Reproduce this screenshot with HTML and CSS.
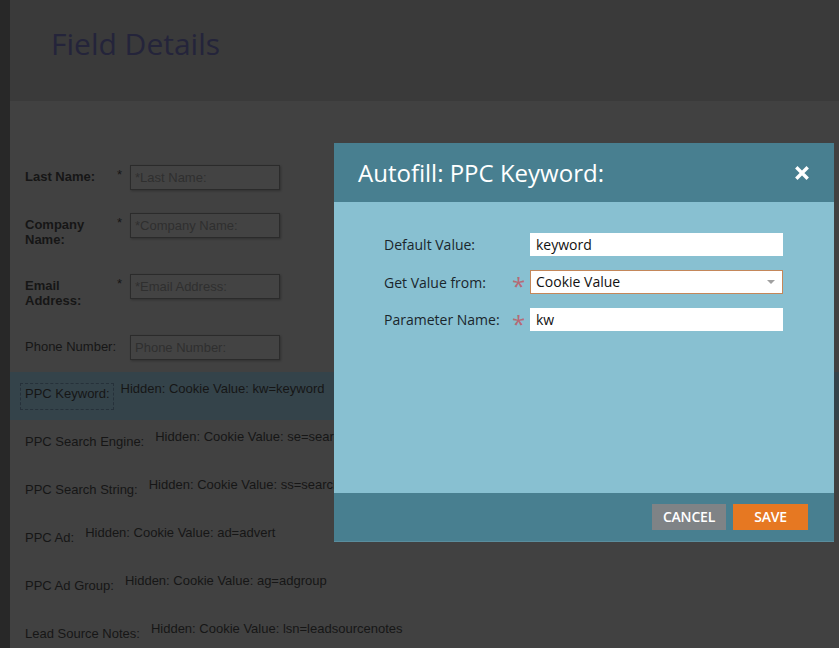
FILE: index.html
```html
<!DOCTYPE html>
<html>
<head>
<meta charset="utf-8">
<title>Field Details</title>
<link rel="stylesheet" href="styles.css">
</head>
<body>
<div class="page">
  <div class="strip"></div>
  <div class="main">
    <div class="header"><h1 class="title">Field Details</h1></div>
    <div class="form">
      <div class="frow h48">
        <div class="flabel bold">Last Name:</div>
        <div class="fstar">*</div>
        <div class="finput">*Last Name:</div>
      </div>
      <div class="frow h61">
        <div class="flabel bold">Company Name:</div>
        <div class="fstar">*</div>
        <div class="finput">*Company Name:</div>
      </div>
      <div class="frow h61">
        <div class="flabel bold">Email Address:</div>
        <div class="fstar">*</div>
        <div class="finput">*Email Address:</div>
      </div>
      <div class="frow h37">
        <div class="flabel">Phone Number:</div>
        <div class="fstar"></div>
        <div class="finput">Phone Number:</div>
      </div>
      <div class="hrow selected">
        <div class="hlabel">PPC Keyword:</div>
        <div class="hvalue">Hidden: Cookie Value: kw=keyword</div>
      </div>
      <div class="hrow">
        <div class="hlabel">PPC Search Engine:</div>
        <div class="hvalue">Hidden: Cookie Value: se=searchengine</div>
      </div>
      <div class="hrow">
        <div class="hlabel">PPC Search String:</div>
        <div class="hvalue">Hidden: Cookie Value: ss=searchstring</div>
      </div>
      <div class="hrow">
        <div class="hlabel">PPC Ad:</div>
        <div class="hvalue">Hidden: Cookie Value: ad=advert</div>
      </div>
      <div class="hrow">
        <div class="hlabel">PPC Ad Group:</div>
        <div class="hvalue">Hidden: Cookie Value: ag=adgroup</div>
      </div>
      <div class="hrow">
        <div class="hlabel">Lead Source Notes:</div>
        <div class="hvalue">Hidden: Cookie Value: lsn=leadsourcenotes</div>
      </div>
    </div>
  </div>
</div>

<div class="modal">
  <div class="mhead">
    <div class="mtitle">Autofill: PPC Keyword:</div>
    <svg class="mclose" width="14" height="14" viewBox="0 0 14 14"><path d="M2.5 2.5 L11.5 11.5 M11.5 2.5 L2.5 11.5" stroke="#fff" stroke-width="3.4" stroke-linecap="square"/></svg>
  </div>
  <div class="mbody">
    <div class="mgrid">
      <div class="mlabel">Default Value:</div>
      <div class="mstar"></div>
      <div class="minput">keyword</div>

      <div class="mlabel">Get Value from:</div>
      <div class="mstar">*</div>
      <div class="minput select">Cookie Value<span class="caret"></span></div>

      <div class="mlabel">Parameter Name:</div>
      <div class="mstar">*</div>
      <div class="minput">kw</div>
    </div>
  </div>
  <div class="mfoot">
    <div class="btn cancel">CANCEL</div>
    <div class="btn save">SAVE</div>
  </div>
</div>
</body>
</html>
```

FILE: styles.css
```css
html, body {
  margin: 0;
  padding: 0;
}
body {
  width: 839px;
  height: 648px;
  overflow: hidden;
  background: #414141;
  font-family: "Liberation Sans", Arial, sans-serif;
  position: relative;
}
.page {
  display: flex;
  height: 648px;
}
.strip {
  width: 10px;
  background: #282828;
  flex: none;
}
.main {
  flex: 1;
  display: flex;
  flex-direction: column;
  min-height: 0;
}
.header {
  flex: none;
  height: 101px;
  box-sizing: border-box;
  background: #3a3a3a;
  padding-left: 41px;
  padding-top: 24px;
}
.title {
  margin: 0;
  font-family: "Open Sans", sans-serif;
  font-weight: 400;
  font-size: 30px;
  line-height: 40px;
  color: #24243a;
}
.form {
  flex: none;
  padding-top: 64px;
}
.frow {
  display: grid;
  grid-template-columns: 92px 13px 150px;
  align-items: start;
  padding-left: 15px;
  font-size: 13px;
  color: #161616;
}
.h48 { height: 48px; }
.h61 { height: 61px; }
.h37 { height: 37px; }
.flabel {
  line-height: 15px;
  padding-top: 4px;
}
.bold {
  font-weight: 700;
}
.fstar {
  padding-top: 2px;
  line-height: 15px;
  font-size: 13px;
}
.finput {
  height: 25px;
  box-sizing: border-box;
  border: 1px solid #2b2b2b;
  background: #434343;
  box-shadow: 1px 1px 2px rgba(0,0,0,0.25);
  color: #2f2f2f;
  padding-left: 4px;
  line-height: 23px;
  font-size: 13px;
  white-space: nowrap;
}
.hrow {
  height: 48px;
  box-sizing: border-box;
  display: flex;
  align-items: flex-start;
  padding-left: 10px;
  padding-top: 9px;
  gap: 7px;
  font-size: 13px;
  color: #161616;
  white-space: nowrap;
}
.hrow.selected {
  background: #34434a;
}
.hlabel {
  margin-top: 2px;
  border: 1px dashed transparent;
  padding: 2px 3px 7px 4px;
  line-height: 16px;
}
.selected .hlabel {
  border-color: #26313a;
}
.hvalue {
  line-height: 16px;
}

/* modal */
.modal {
  position: absolute;
  left: 334px;
  top: 143px;
  width: 500px;
  height: 399px;
  display: flex;
  flex-direction: column;
  font-family: "Open Sans", sans-serif;
}
.mhead {
  height: 59px;
  flex: none;
  background: #487f90;
  display: flex;
  align-items: center;
  justify-content: space-between;
  padding: 0 25px 0 24px;
}
.mtitle {
  color: #ffffff;
  font-size: 24px;
  font-weight: 400;
  line-height: 30px;
  padding-top: 1px;
}
.mclose {
  display: block;
}
.mbody {
  flex: 1;
  background: #88c0d1;
  padding: 31px 0 0 50px;
}
.mgrid {
  display: grid;
  grid-template-columns: 128px 18px 253px;
  row-gap: 14px;
  align-items: center;
}
.mlabel {
  font-size: 14px;
  color: #1a262c;
}
.mstar {
  color: #b66a75;
  font-size: 24px;
  line-height: 20px;
  height: 20px;
  padding-top: 4px;
  box-sizing: border-box;
  text-align: left;
}
.minput {
  height: 23px;
  box-sizing: border-box;
  background: #ffffff;
  font-size: 14px;
  line-height: 23px;
  padding-left: 6px;
  color: #111;
  position: relative;
}
.minput.select {
  height: 24px;
  border: 1px solid #c4875a;
  padding-left: 5px;
  line-height: 22px;
}
.caret {
  position: absolute;
  right: 7px;
  top: 9px;
  width: 0;
  height: 0;
  border-left: 4px solid transparent;
  border-right: 4px solid transparent;
  border-top: 4px solid #a0a0a0;
}
.mfoot {
  height: 49px;
  flex: none;
  box-sizing: border-box;
  background: #487f90;
  border-bottom: 1px solid #5a8d9d;
  display: flex;
  justify-content: flex-end;
  align-items: center;
  gap: 7px;
  padding-right: 26px;
}
.btn {
  height: 26px;
  line-height: 26px;
  color: #ffffff;
  font-size: 14px;
  font-weight: 600;
  text-align: center;
  letter-spacing: -0.2px;
}
.cancel {
  width: 74px;
  background: #7f8386;
}
.save {
  width: 75px;
  background: #e67822;
}
```
